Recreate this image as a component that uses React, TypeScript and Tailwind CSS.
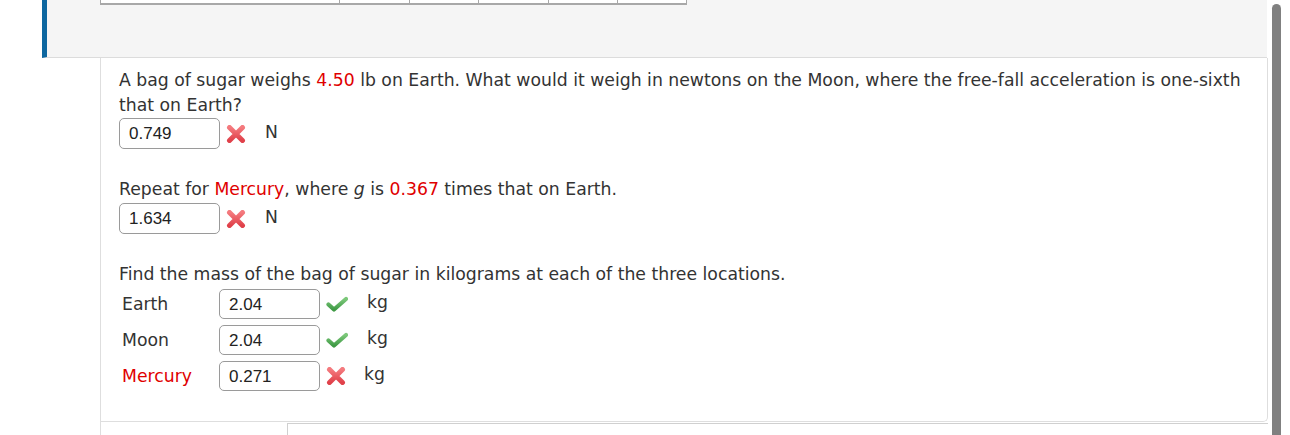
import React from "react";

const cols = [240, 70, 69, 70, 69, 69];

const WrongIcon = () => (
  <svg width="20" height="18" viewBox="0 0 20 18" aria-hidden="true">
    <defs>
      <linearGradient id="xg" x1="0" y1="0" x2="0" y2="1">
        <stop offset="0" stopColor="#f47a7e" />
        <stop offset="1" stopColor="#e0414a" />
      </linearGradient>
    </defs>
    <path d="M3.5 2.5 L16.5 15.5 M16.5 2.5 L3.5 15.5" stroke="url(#xg)" strokeWidth="5" strokeLinecap="round" fill="none" />
  </svg>
);

const RightIcon = () => (
  <svg width="22" height="16" viewBox="0 0 22 16" aria-hidden="true">
    <defs>
      <linearGradient id="cg" x1="0" y1="0" x2="0" y2="1">
        <stop offset="0" stopColor="#7cc87a" />
        <stop offset="1" stopColor="#3f9a45" />
      </linearGradient>
    </defs>
    <path d="M2.5 8.5 L8 13.5 L20 3" stroke="url(#cg)" strokeWidth="4.2" strokeLinecap="round" strokeLinejoin="round" fill="none" />
  </svg>
);

const Answer = ({ value, ok, unit, unitGap }: { value: string; ok: boolean; unit: string; unitGap: string }) => (
  <div className="flex h-full">
    <div className="w-[101px] flex items-center pl-[9px] border border-[#9a9a9a] rounded-[5px] bg-white font-['Liberation_Sans',Arial,sans-serif] text-[17px] text-[#222]">
      {value}
    </div>
    <div className="ml-[6px] flex items-center">{ok ? <RightIcon /> : <WrongIcon />}</div>
    <span className={`${unitGap} flex items-center -mt-[3px]`}>{unit}</span>
  </div>
);

const massRows = [
  { label: "Earth", value: "2.04", ok: true, red: false, gap: "ml-[19px]" },
  { label: "Moon", value: "2.04", ok: true, red: false, gap: "ml-[19px]" },
  { label: "Mercury", value: "0.271", ok: false, red: true, gap: "ml-[18px]" },
];

export default function App() {
  return (
    <div className="w-[1290px] h-[435px] overflow-hidden bg-white flex font-['DejaVu_Sans',Verdana,sans-serif] text-[17.25px] text-[#333]">
      <div className="w-[1268px] flex flex-col">
        {/* header strip with the end of the previous table */}
        <div className="ml-[42px] w-[1225px] h-[58px] shrink-0 bg-[#f5f5f5] border-l-[5px] border-l-[#0d67a0] border-b border-b-[#dcdcdc] pl-[53px]">
          <div className="flex">
            {cols.map((w, i) => (
              <div
                key={i}
                style={{ width: w }}
                className={`h-[5px] bg-white border-b-2 border-b-[#a8a8a8] border-r border-r-[#a8a8a8] ${i === 0 ? "border-l border-l-[#a8a8a8]" : ""}`}
              />
            ))}
          </div>
        </div>

        {/* question panel */}
        <div className="ml-[100px] h-[364px] shrink-0 border-l border-r border-b border-[#dedede] rounded-br-[5px] pt-[10px] pl-[18px] pr-[20px] leading-[25px]">
          <p>
            A bag of sugar weighs <span className="text-[#e00000]">4.50</span> lb on Earth. What would it weigh in newtons on the Moon, where the free-fall acceleration is one-sixth that on Earth?
          </p>
          <div className="h-[31px]">
            <Answer value="0.749" ok={false} unit="N" unitGap="ml-[19px]" />
          </div>

          <p className="mt-[28px]">
            Repeat for <span className="text-[#e00000]">Mercury</span>, where <i>g</i> is <span className="text-[#e00000]">0.367</span> times that on Earth.
          </p>
          <div className="h-[31px] mt-[1px]">
            <Answer value="1.634" ok={false} unit="N" unitGap="ml-[19px]" />
          </div>

          <p className="mt-[28px]">Find the mass of the bag of sugar in kilograms at each of the three locations.</p>
          <div className="mt-[2px] flex flex-col gap-[6px]">
            {massRows.map((r) => (
              <div key={r.label} className="flex h-[30px] items-center">
                <span className={`w-[100px] pl-[3px] ${r.red ? "text-[#e00000]" : ""}`}>{r.label}</span>
                <div className="h-[30px]">
                  <Answer value={r.value} ok={r.ok} unit="kg" unitGap={r.gap} />
                </div>
              </div>
            ))}
          </div>
        </div>

        {/* start of the next section */}
        <div className="ml-[100px] flex flex-1">
          <div className="w-[187px] border-l border-[#dedede]" />
          <div className="flex-1 mt-[1px] border-l border-t border-[#d0d0d0]" />
        </div>
      </div>

      {/* scroll thumb */}
      <div className="pl-[4px] pt-[4px]">
        <div className="w-[9px] h-[440px] rounded-t-full bg-[#808080]" />
      </div>
    </div>
  );
}
